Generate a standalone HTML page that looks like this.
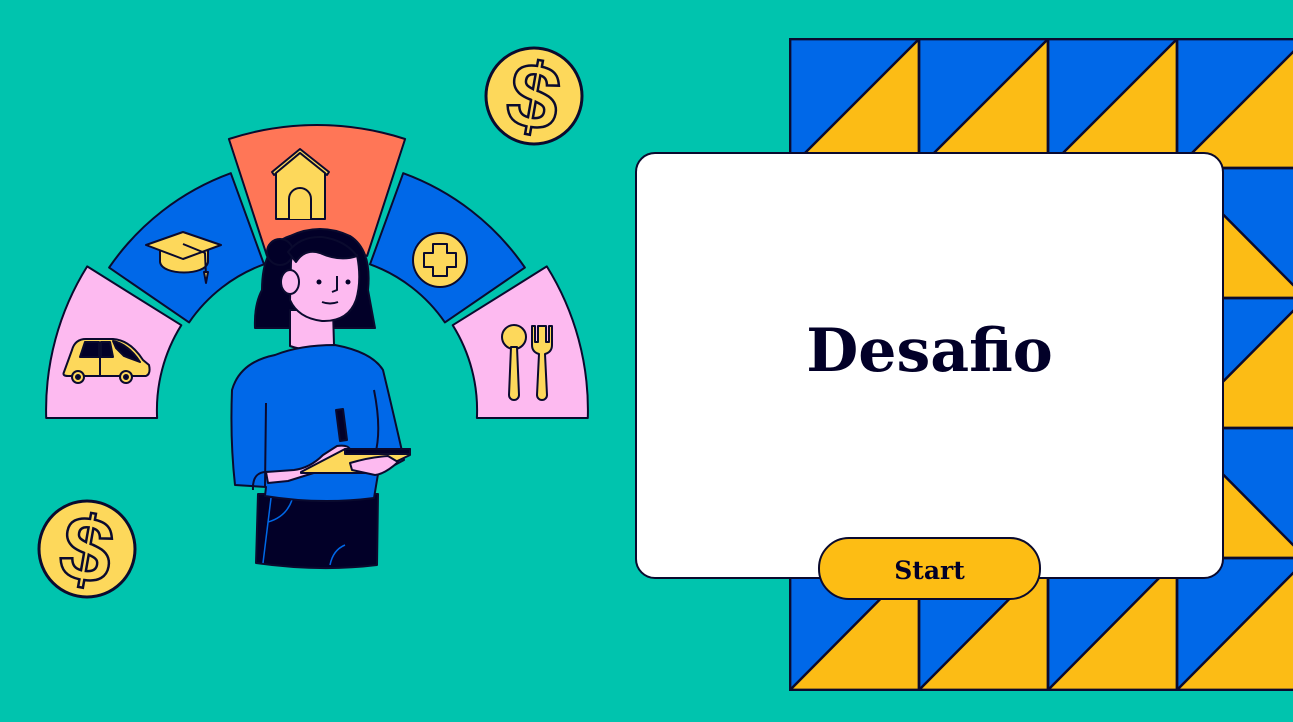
<!DOCTYPE html>
<html><head><meta charset="utf-8"><style>
html,body{margin:0;padding:0}
body{width:1293px;height:722px;overflow:hidden;background:#00c4ae;position:relative;font-family:"DejaVu Serif","Liberation Serif",serif}
svg{position:absolute;left:0;top:0}
.card{position:absolute;left:635px;top:152px;width:585px;height:423px;background:#fff;border:2px solid #0a0a2e;border-radius:20px}
.title{position:absolute;left:635px;top:316px;width:589px;text-align:center;font-size:60px;font-weight:bold;color:#020028}
.btn{position:absolute;left:818px;top:537px;width:219px;height:59px;background:#fdbd14;border:2px solid #0a0a2e;border-radius:31px;text-align:center;line-height:64px;font-size:25px;font-weight:bold;color:#020028}
</style></head><body>
<svg width="1293" height="722" viewBox="0 0 1293 722">
<defs><clipPath id="gc"><rect x="789" y="38" width="504" height="653"/></clipPath></defs>
<g clip-path="url(#gc)" stroke="#0a0a2e" stroke-width="2.5" stroke-linejoin="round">
<rect x="790" y="39" width="520" height="651" fill="#0068e8"/>
<polygon points="790,168 919,39 919,168" fill="#fcbc15"/>
<polygon points="919,168 1048,39 1048,168" fill="#fcbc15"/>
<polygon points="1048,168 1177,39 1177,168" fill="#fcbc15"/>
<polygon points="1177,168 1306,39 1306,168" fill="#fcbc15"/>
<polygon points="790,690 919,560 919,690" fill="#fcbc15"/>
<polygon points="919,690 1048,560 1048,690" fill="#fcbc15"/>
<polygon points="1048,690 1177,560 1177,690" fill="#fcbc15"/>
<polygon points="1177,690 1306,560 1306,690" fill="#fcbc15"/>
<polygon points="1177,168 1306,298 1177,298" fill="#fcbc15"/>
<polygon points="1177,428 1306,298 1306,428" fill="#fcbc15"/>
<polygon points="1177,428 1306,558 1177,558" fill="#fcbc15"/>
<g fill="none">
<line x1="790" y1="39" x2="790" y2="690"/><line x1="919" y1="39" x2="919" y2="690"/><line x1="1048" y1="39" x2="1048" y2="690"/><line x1="1177" y1="39" x2="1177" y2="690"/>
<line x1="790" y1="39" x2="1300" y2="39"/><line x1="790" y1="168" x2="1300" y2="168"/><line x1="790" y1="298" x2="1300" y2="298"/><line x1="790" y1="428" x2="1300" y2="428"/><line x1="790" y1="558" x2="1300" y2="558"/><line x1="790" y1="690" x2="1300" y2="690"/>
</g>
</g>

<g stroke="#0a0a2e" stroke-width="2" stroke-linejoin="round">
<path d="M46.2,418 A271 271 0 0 1 87.2,266.4 L181.3,325.2 A160 160 0 0 0 157.1,418 Z" fill="#fdbaf0"/>
<path d="M109.1,267.6 A252 252 0 0 1 230.8,173.2 L264,264.3 A155 155 0 0 0 189.1,322.4 Z" fill="#0068e8"/>
<path d="M228.9,139 A285 285 0 0 1 405.1,139 L367.1,255.9 A162 162 0 0 0 267,255.9 Z" fill="#ff7657"/>
<path d="M403.2,173.2 A252 252 0 0 1 524.9,267.6 L444.9,322.4 A155 155 0 0 0 370,264.3 Z" fill="#0068e8"/>
<path d="M546.8,266.4 A271 271 0 0 1 587.8,418 L476.9,418 A160 160 0 0 0 452.7,325.2 Z" fill="#fdbaf0"/>
</g>

<g stroke="#0a0a2e" stroke-width="2" fill="#fdd85b" stroke-linejoin="round">
<path d="M272,172 L300,149 L329,172 L327,175 L300,153 L274,175 Z"/>
<path d="M276,173 L300,153 L325,173 L325,219 L276,219 Z"/>
<path d="M311,219 L311,199 A11 11 0 0 0 289,199 L289,219" fill="#fdd85b"/>
<path d="M160,250 L160,262 C162,276 206,276 208,262 L208,250 Z"/>
<path d="M146,245 L183,232 L221,245 L183,259 Z"/>
<path d="M183,244 L205,253 L206,276" fill="none"/>
<path d="M204,272 L208,272 L206,283 Z" fill="#fdd85b"/>
<circle cx="440" cy="260" r="27"/>
<path d="M433,244 h14 v9 h9 v14 h-9 v9 h-14 v-9 h-9 v-14 h9 Z"/>
<circle cx="514" cy="337" r="12"/>
<path d="M511,347 L509,395 A5 5 0 0 0 519,395 L517,347 Z"/>
<path d="M532,326 L532,345 Q532,352 539,354 L537,395 A5 5 0 0 0 547,395 L545,354 Q552,352 552,345 L552,326 L549,326 L549,342 L546,342 L546,326 L538,326 L538,342 L535,342 L535,326 Z"/>
<path d="M64,372 L72,350 Q75,339 86,339 L113,339 Q130,340 143,360 L149,365 Q151,374 146,376 L68,376 Q62,376 64,372 Z"/>
<path d="M80,357 L85,342 L99,342 L99,357 Z" fill="#020028"/>
<path d="M101,342 L110,342 L113,357 L101,357 Z" fill="#020028"/>
<path d="M113,341 Q128,344 140,362 L124,356 L116,348 Z" fill="#020028"/>
<line x1="100" y1="342" x2="100" y2="375"/>
<circle cx="78" cy="377" r="6"/><circle cx="78" cy="377" r="2" fill="#020028"/>
<circle cx="126" cy="377" r="6"/><circle cx="126" cy="377" r="2" fill="#020028"/>
</g>

<g stroke="#0a0a2e" stroke-width="3">
<circle cx="534" cy="96" r="48" fill="#fdd85b"/>
<circle cx="87" cy="549" r="48" fill="#fdd85b"/>
</g>
<g font-family="Liberation Sans,sans-serif" font-weight="bold" font-size="92" fill="#fdd85b" stroke="#0a0a2e" stroke-width="2.5" text-anchor="middle">
<text x="534" y="128" transform="rotate(10 534 96)">$</text>
<text x="87" y="581" transform="rotate(10 87 549)">$</text>
</g>

<g stroke="#0a0a2e" stroke-width="2" stroke-linejoin="round">
<path d="M262,290 Q262,245 290,236 Q320,222 350,236 Q372,250 368,290 L375,328 L255,328 Q254,305 262,290 Z" fill="#020028"/>
<circle cx="280" cy="252" r="13" fill="#020028"/>
<path d="M290,310 L290,346 Q312,354 334,345 L333,310 Z" fill="#fdbaf0"/>
<path d="M291,262 Q292,245 315,251 Q340,258 357,255 Q362,280 356,300 Q348,322 322,321 Q298,318 290,300 Z" fill="#fdbaf0"/>
<path d="M288,252 Q300,236 322,237 Q345,240 357,256 Q340,262 320,253 Q305,248 296,262 Z" fill="#020028"/>
<ellipse cx="290" cy="282" rx="9" ry="12" fill="#fdbaf0"/>
<circle cx="319" cy="282" r="2.5" fill="#020028" stroke="none"/>
<circle cx="348" cy="282" r="2.5" fill="#020028" stroke="none"/>
<path d="M337,276 L337,290 L332,292" fill="none"/>
<path d="M322,302 Q330,305 338,302" fill="none"/>
<path d="M258,494 L378,494 L377,565 Q320,572 256,563 Z" fill="#020028"/>
<path d="M271,498 L263,563 M292,500 Q286,517 268,522 M345,545 Q333,550 330,565" fill="none" stroke="#0068e8" stroke-width="1.5"/>
<path d="M275,355 Q300,345 335,345 Q372,352 383,370 Q395,420 404,460 L378,474 L374,498 Q320,505 265,496 L266,487 L235,485 Q230,440 232,390 Q240,362 275,355 Z" fill="#0068e8"/>
<path d="M266,403 L265,487 M374,390 Q382,430 375,455 M253,490 Q252,470 270,472" fill="none"/>
<path d="M266,472 L294,470 Q310,468 323,455 L337,446 Q350,444 351,452 L345,459 L320,471 L288,481 L268,483 Z" fill="#fdbaf0"/>
<path d="M336,410 L343,409 L347,440 L340,441 Z" fill="#020028"/>
<path d="M301,472 L345,449 L410,449 L410,455 L372,473 L301,473 Z" fill="#fdd85b"/>
<path d="M345,449 L410,449 L410,454 L345,454 Z" fill="#020028"/>
<path d="M350,463 Q370,457 388,456 L398,462 Q385,474 375,475 L352,470 Z" fill="#fdbaf0"/>
</g>
</svg>
<div class="card"></div>
<div class="title">Desafio</div>
<div class="btn">Start</div>
</body></html>
